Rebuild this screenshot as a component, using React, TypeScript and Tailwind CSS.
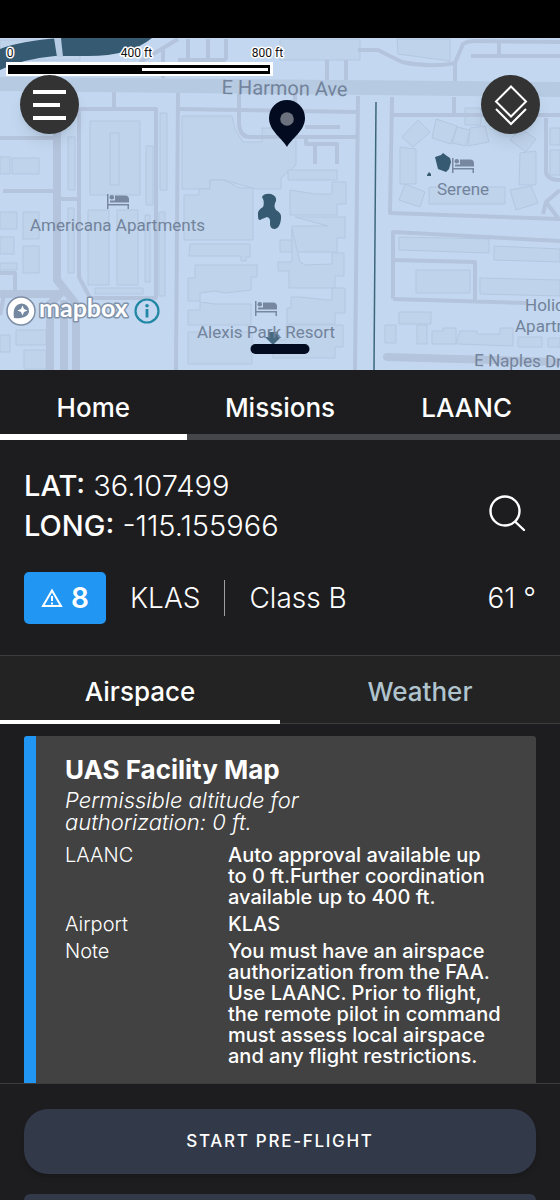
import { useState } from "react";

const MAP_FONT = "font-['Roboto','Noto_Sans',sans-serif]";

const PRIMARY_TABS = ["Home", "Missions", "LAANC"];
const SECONDARY_TABS = ["Airspace", "Weather"];

const ADVISORY = {
  title: "UAS Facility Map",
  summary: "Permissible altitude for authorization: 0 ft.",
  rows: [
    {
      label: "LAANC",
      value:
        "Auto approval available up to 0 ft.Further coordination available up to 400 ft.",
    },
    { label: "Airport", value: "KLAS" },
    {
      label: "Note",
      value:
        "You must have an airspace authorization from the FAA. Use LAANC. Prior to flight, the remote pilot in command must assess local airspace and any flight restrictions.",
    },
  ],
};

const BUILDINGS = [
  "M0 40H80V60H0Z",
  "M280 39H360V60H280Z",
  "M397 39H450V61L398 54Z",
  "M90 121H140V195H90Z",
  "M110 133H119V185H110Z",
  "M68 137H75V190H68Z",
  "M146 146H153V205H146Z",
  "M160 113H167V190H160Z",
  "M182 116H232L235 129L243 142H262V128H296V165L281 178V189H256L224 180H210V189H182Z",
  "M184 195H199V189H210V180H224L240 188H253V240H184Z",
  "M288 170H337V180H288Z",
  "M290 190L315 194H332V182H346V204H337V215H290Z",
  "M295 217H345V238H337V252H280V240H292V226H328Z",
  "M292 229L300 262L305 265L332 264V253H344V276H335V288H289V271H278V262H292Z",
  "M300 297L328 300H332V288H345V313H335V324H287V308H291V297Z",
  "M286 325H343V347H335V358H273V340H286Z",
  "M190 244H250V257H246V261H241V256H189Z",
  "M195 265H257V277H251V290L226 293L215 291L200 293V301H188V278H195Z",
  "M188 310H200V302L215 304H251V325H188Z",
  "M188 332H252V364H188Z",
  "M88 210H109V285H88Z",
  "M117 210H138V285H117Z",
  "M145 215H150V282H145Z",
  "M159 212H165V296H159Z",
  "M95 288H143V294H95Z",
  "M68 208H74V273H68Z",
  "M23 212H39V239H23Z",
  "M23 246H39V273H23Z",
  "M0 212H17V229H0Z",
  "M0 237H14V254H0Z",
  "M12 158H39V174H12Z",
  "M0 157H10V174H0Z",
  "M0 263H17V270H0Z",
  "M16 330H46V345H16Z",
  "M0 335H10V352H0Z",
  "M24 350H46V369H24Z",
  "M402 137L418 120L430 132L413 147Z",
  "M436 119L457 126L451 144L432 138Z",
  "M457 127L470 130L466 146L452 143Z",
  "M470 128L485 126L489 142L468 146Z",
  "M510 140L520 128L536 139L526 152Z",
  "M400 147L416 149V184H400Z",
  "M520 153L536 151V185H519Z",
  "M405 184L425 192L420 207L399 200Z",
  "M429 187H505V204H429Z",
  "M510 190L531 186L538 203L516 210Z",
  "M465 108H481V125H465Z",
  "M399 237L489 239V253L399 250Z",
  "M494 246L560 249V262L494 260Z",
  "M416 270H470V293H416Z",
  "M480 278L560 280V296L480 294Z",
  "M399 312H431V324H399Z",
  "M385 325H396V343H385Z",
  "M417 325H427V344H417Z",
  "M432 331H443V328H456V344H432Z",
  "M457 340L460 331H477V334H500V328H513V346L457 344Z",
  "M518 337H542V347H518Z",
  "M548 338H560V347H548Z",
  "M550 128H560V145H550Z",
  "M550 150H560V175H550Z",
];

const ROADS = [
  "M79 109V277L90 298H156V109H79",
  "M114 91V109",
  "M178 92L176 370",
  "M178 109L357 112",
  "M239 92V124Q240 137 250 137H357",
  "M295 93V110",
  "M305 127H340",
  "M306 138V144H337V164M315 145V164",
  "M358 96L355 370",
  "M392 97L390 213L560 219",
  "M392 115H560",
  "M454 97V114",
  "M358 50H378L402 62Q430 68 455 63",
  "M455 84V63L463 44Q467 41 476 41L560 42",
  "M471 56H560",
  "M499 42V56",
  "M327 60V82M346 60V82",
  "M393 299V232L560 241",
  "M393 260L475 262V300M393 299L526 303",
  "M546 118V172Q547 180 560 180",
  "M543 214L546 202L560 190M546 202L558 218",
  "M0 138H55M3 191H55",
  "M0 273H15V290M0 315L5 290",
  "M61 199H79",
  "M140 62L178 39",
  "M163 50V78M188 39V60M208 39V60M226 39V60",
  "M178 60H226",
];

function BedIcon({ x, y }: { x: number; y: number }) {
  return (
    <g transform={`translate(${x} ${y})`} fill="#77879f">
      <rect x="0" y="0" width="1.5" height="15" />
      <rect x="0" y="10" width="22" height="1.5" />
      <rect x="20.5" y="10" width="1.5" height="5" />
      <circle cx="4.8" cy="3.2" r="2.3" />
      <path d="M8 1.5H18Q22 1.5 22 5.5V8.5H3V6.5H8Z" />
    </g>
  );
}

function MapCanvas() {
  return (
    <svg
      viewBox="0 0 560 332"
      preserveAspectRatio="xMidYMid slice"
      className={`block h-full w-full ${MAP_FONT}`}
      role="img"
      aria-label="Map around Alexis Park Resort"
    >
      <rect width="560" height="332" fill="#c3d8f0" />
      <g transform="translate(0 -38)">
        <g fill="#bfd3eb" stroke="#b4c7e0" strokeWidth="1">
          {BUILDINGS.map((d) => (
            <path key={d} d={d} />
          ))}
        </g>
        <g fill="none" stroke="#b4c4dc" strokeWidth="4" strokeLinejoin="round">
          {ROADS.map((d) => (
            <path key={d} d={d} />
          ))}
          <path d="M57 92V280L76 304V372" strokeWidth="8" />
          <path d="M0 294H60L50 304V372M64 300V372" strokeWidth="8" />
          <path
            d="M387 357L560 362"
            strokeWidth="8"
            strokeLinecap="round"
          />
        </g>
        <path d="M0 77L560 82V97L0 91Z" fill="#b6cae2" />
        <path
          d="M0 49Q20 41 60 38H152Q130 56 88 56H55Q22 59 0 70Z"
          fill="#365a72"
        />
        <path d="M54 38H61L63 57H57Z" fill="#b6cae2" />
        <path d="M376 102L374 370" stroke="#3c667c" strokeWidth="1.5" />

        <g fill="#365a72">
          <path d="M262 197Q264 193 271 194Q277 196 276 201Q273 206 276 210Q282 213 281 219Q280 228 275 229Q270 229 270 224Q271 218 267 217L262 219Q258 222 258 216Q257 210 263 207Q265 202 262 197Z" />
          <path d="M435 157L441 155L443 153L447 156L450 158L451 162L449 169L446 172L438 169Z" />
          <path d="M427 175L429 172L431 174V176H427Z" />
        </g>

        <BedIcon x={107} y={194} />
        <BedIcon x={452} y={158} />
        <BedIcon x={255} y={301} />

        <path d="M268 332H278V337H281L273 345L265 337H268Z" fill="#466a81" />

        <g fill="#72839b" fontSize="17" textAnchor="middle">
          <text x="284.5" y="95" fontSize="20" transform="rotate(1 284 95)">
            E Harmon Ave
          </text>
          <text x="117.5" y="231">
            Americana Apartments
          </text>
          <text x="463" y="195">
            Serene
          </text>
          <text x="266" y="338">
            Alexis Park Resort
          </text>
          <text x="525" y="311" textAnchor="start">
            Holiday
          </text>
          <text x="515" y="332" textAnchor="start">
            Apartments
          </text>
          <text
            x="474"
            y="366"
            textAnchor="start"
            transform="rotate(1 474 366)"
          >
            E Naples Dr
          </text>
        </g>

        <path
          d="M287 147C283 139 269 131 269 118A18 18 0 0 1 305 118C305 131 291 139 287 147Z"
          fill="#020b20"
        />
        <circle cx="287" cy="119" r="6.8" fill="#6c717e" />
      </g>
    </svg>
  );
}

function ScaleBar() {
  return (
    <svg
      viewBox="0 0 290 38"
      className={`absolute top-1 left-0 h-[38px] w-[290px] ${MAP_FONT}`}
      role="img"
      aria-label="Map scale"
    >
      <g
        fontSize="12"
        fill="#111"
        stroke="#fff"
        strokeWidth="3"
        paintOrder="stroke"
        strokeLinejoin="round"
        textAnchor="middle"
      >
        <text x="10" y="15">0</text>
        <text x="136.5" y="15">400 ft</text>
        <text x="267.5" y="15">800 ft</text>
      </g>
      <rect x="6" y="20" width="267" height="14" fill="#fff" />
      <rect x="8" y="23" width="262" height="9" fill="#000" />
      <rect x="142" y="26" width="126" height="3" fill="#fff" />
    </svg>
  );
}

function MapboxLogo() {
  return (
    <svg
      viewBox="0 0 126 34"
      className="h-[34px] w-[126px]"
      role="img"
      aria-label="Mapbox"
    >
      <circle cx="15" cy="17" r="14" fill="#fff" stroke="#7e8fa6" strokeWidth="1.5" />
      <path
        d="M8 24C7 17 8 10 16 9.500A7.500 7.500 0 0 1 23 17C23 23 15 25 8 24Z"
        fill="#7388a0"
      />
      <path d="M16.500 11.500L18 15L21.500 16.500L18 18L16.500 21.500L15 18L11.500 16.500L15 15Z" fill="#fff" />
      <text
        x="33"
        y="23"
        fontSize="25"
        fontWeight="700"
        fill="#fff"
        stroke="#8193aa"
        strokeWidth="3"
        paintOrder="stroke"
        strokeLinejoin="round"
        className="font-['Lato','Open_Sans',sans-serif]"
      >
        mapbox
      </text>
    </svg>
  );
}

function MapView() {
  return (
    <section className="relative h-[332px] shrink-0 overflow-hidden">
      <MapCanvas />
      <ScaleBar />
      <button
        type="button"
        aria-label="Open menu"
        className="absolute top-[37px] left-5 flex size-[59px] flex-col items-start justify-center gap-[9px] rounded-full bg-[#333333] pl-[13px] shadow-lg"
      >
        <span className="h-1 w-[33px] bg-white" />
        <span className="h-1 w-[27px] bg-white" />
        <span className="h-1 w-[33px] bg-white" />
      </button>
      <button
        type="button"
        aria-label="Map layers"
        className="absolute top-[37px] right-5 flex size-[59px] items-center justify-center rounded-full bg-[#333333] shadow-lg"
      >
        <svg
          viewBox="0 0 34 42"
          className="h-[42px] w-[34px]"
          fill="none"
          stroke="#fff"
          strokeWidth="2"
        >
          <path d="M17 2.500L32 17.500L17 32.500L2 17.500Z" />
          <path d="M2 25L17 40L32 25" />
        </svg>
      </button>
      <div className="absolute bottom-[42px] left-1.5 flex items-center gap-0.5">
        <MapboxLogo />
        <button type="button" aria-label="Map attribution">
          <svg viewBox="0 0 26 26" className="size-[26px]" fill="#2286a5">
            <circle
              cx="13"
              cy="13"
              r="11.500"
              fill="none"
              stroke="#2286a5"
              strokeWidth="2.200"
            />
            <circle cx="13" cy="7.800" r="1.800" />
            <rect x="11.600" y="11" width="2.800" height="8.500" />
          </svg>
        </button>
      </div>
      <button
        type="button"
        aria-label="Resize panel"
        className="absolute bottom-4 left-1/2 h-2.5 w-[59px] -translate-x-1/2 rounded-full bg-[#020b20]"
      />
    </section>
  );
}

function PrimaryTabs() {
  const [active, setActive] = useState("Home");

  return (
    <nav className="grid shrink-0 grid-cols-3">
      {PRIMARY_TABS.map((tab) => (
        <button
          key={tab}
          type="button"
          onClick={() => setActive(tab)}
          className={`h-[70px] border-b-[6px] pt-3 text-[26px] leading-8 font-medium text-white ${
            active === tab ? "border-white" : "border-[#454649]"
          }`}
        >
          {tab}
        </button>
      ))}
    </nav>
  );
}

function LocationSummary() {
  return (
    <section className="shrink-0 px-6 pt-[26px] pb-[31px] text-[28px] leading-10 font-light text-white">
      <div className="flex items-center justify-between text-[29px]">
        <div>
          <p>
            <span className="font-medium">LAT:</span> 36.107499
          </p>
          <p>
            <span className="font-medium">LONG:</span> -115.155966
          </p>
        </div>
        <button
          type="button"
          aria-label="Search location"
          className="mt-4 mr-2"
        >
          <svg
            viewBox="0 0 40 40"
            className="size-10"
            fill="none"
            stroke="#fff"
            strokeWidth="2.400"
            strokeLinecap="round"
          >
            <circle cx="17" cy="17" r="14.500" />
            <path d="M27.500 28L36 36" />
          </svg>
        </button>
      </div>
      <div className="mt-[26px] flex items-center">
        <button
          type="button"
          className="flex h-[52px] w-[82px] items-center justify-center gap-2 rounded-[5px] bg-[#2196f3] font-semibold"
        >
          <svg viewBox="0 0 22 20" className="h-5 w-[22px]" fill="none">
            <path d="M11 2.500L20 18H2Z" stroke="#fff" strokeWidth="2" />
            <path d="M11 8V13M11 14.500V16.500" stroke="#fff" strokeWidth="2" />
          </svg>
          8
        </button>
        <span className="ml-6">KLAS</span>
        <span className="mx-6 h-9 w-px bg-[#a0a0a2]" />
        <span>Class B</span>
        <span className="ml-auto">61 °</span>
      </div>
    </section>
  );
}

function SecondaryTabs() {
  const [active, setActive] = useState("Airspace");

  return (
    <nav className="grid shrink-0 grid-cols-2 border-t border-[#3c3d3f] bg-[#232323]">
      {SECONDARY_TABS.map((tab) => (
        <button
          key={tab}
          type="button"
          onClick={() => setActive(tab)}
          className={`h-[68px] text-[26px] leading-8 font-medium ${
            active === tab
              ? "border-b-4 border-white pt-2 text-white"
              : "border-b border-[#3c3d3f] pt-1 text-[#b0c4ce]"
          }`}
        >
          {tab}
        </button>
      ))}
    </nav>
  );
}

function AdvisoryCard() {
  return (
    <article className="min-h-full rounded-t-[3px] border-l-[12px] border-[#2196f3] bg-[#424242] px-[29px] pt-[18px] pb-3 text-xl leading-[21px] text-white">
      <h2 className="text-[26px] leading-8 font-bold">{ADVISORY.title}</h2>
      <p className="mt-[3px] max-w-[260px] text-[22px] leading-[22px] font-light italic">
        {ADVISORY.summary}
      </p>
      <dl className="mt-3 grid grid-cols-[163px_1fr] gap-y-[6px]">
        {ADVISORY.rows.map((row) => (
          <div key={row.label} className="contents">
            <dt className="font-light">{row.label}</dt>
            <dd className="mr-1 font-medium">{row.value}</dd>
          </div>
        ))}
      </dl>
    </article>
  );
}

export default function App() {
  return (
    <div className="flex h-screen flex-col overflow-hidden bg-[#1d1d1f] font-['Inter','Liberation_Sans',sans-serif]">
      <div className="h-[38px] shrink-0 bg-black" />
      <MapView />
      <PrimaryTabs />
      <LocationSummary />
      <SecondaryTabs />
      <main className="min-h-0 flex-1 overflow-y-auto px-6 pt-3 [scrollbar-width:none]">
        <AdvisoryCard />
      </main>
      <footer className="shrink-0 border-t border-[#3c3d3f] px-6 pt-[25px]">
        <button
          type="button"
          className="h-[65px] w-full rounded-[24px] bg-[#323949] text-[17px] font-medium tracking-widest text-white shadow-md"
        >
          START PRE-FLIGHT
        </button>
        <div className="mt-5 h-1.5 rounded-t-md bg-[#323949]" />
      </footer>
    </div>
  );
}
